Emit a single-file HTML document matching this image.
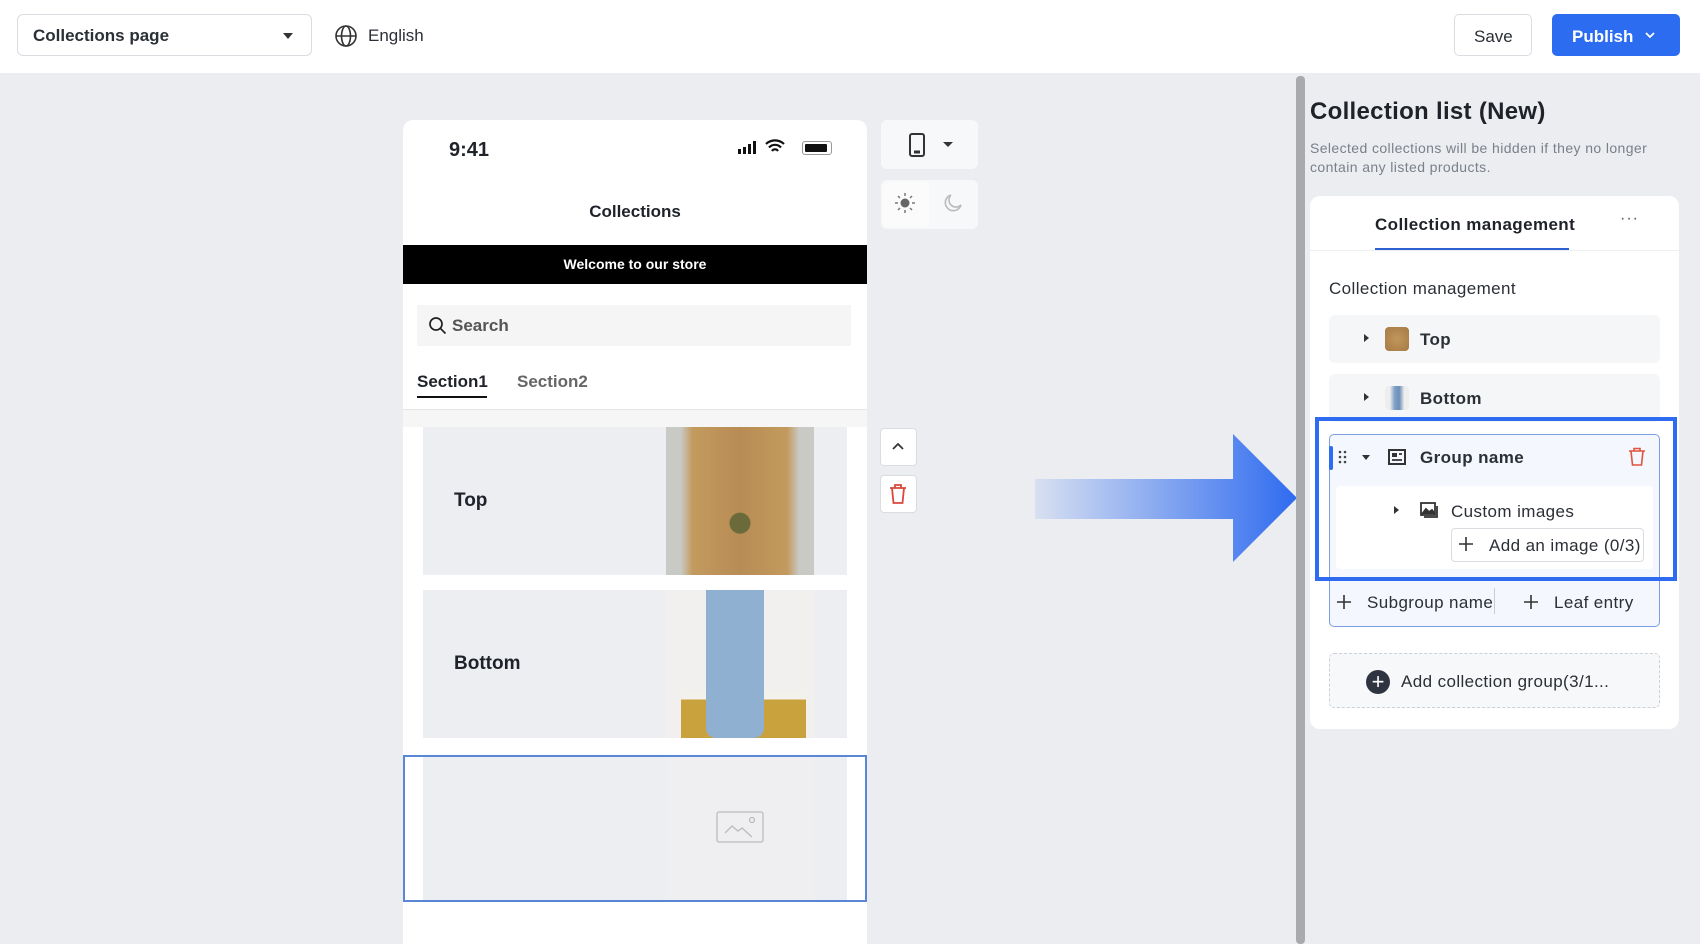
<!DOCTYPE html>
<html><head><meta charset="utf-8"><style>
*{box-sizing:border-box;margin:0;padding:0}
body{width:1700px;height:944px;overflow:hidden;background:#ebedf1;font-family:"Liberation Sans",sans-serif;color:#1f2329;position:relative}
.a{position:absolute}
.top{left:0;top:0;width:1700px;height:73px;background:#fff}
.btn{border:1px solid #d9dce1;border-radius:4px;background:#fff}
.phone{left:403px;top:120px;width:464px;height:824px;background:#fff;border-radius:10px 10px 0 0;overflow:hidden}
.card{background:#eceef2}
.tb{background:#f7f8fa;border-radius:6px}
.row{background:#f5f6f8;border-radius:6px}
.ls{letter-spacing:.4px}
</style></head><body>
<div class="a top"></div>
<div class="a btn" style="left:17px;top:14px;width:295px;height:42px;border-radius:6px"></div>
<div class="a" style="left:33px;top:26px;font-size:17px;font-weight:bold;color:#2b2f36">Collections page</div>
<div class="a" style="left:283px;top:33px;width:0;height:0;border-left:5px solid transparent;border-right:5px solid transparent;border-top:6px solid #333"></div>
<svg class="a" style="left:334px;top:24px" width="24" height="24" viewBox="0 0 24 24" fill="none" stroke="#333" stroke-width="1.6"><circle cx="12" cy="12" r="10"/><ellipse cx="12" cy="12" rx="4.5" ry="10"/><path d="M2 12h20"/></svg>
<div class="a" style="left:368px;top:26px;font-size:17px;color:#2b2f36">English</div>
<div class="a btn" style="left:1454px;top:14px;width:78px;height:42px;border-radius:5px"></div>
<div class="a" style="left:1474px;top:27px;font-size:17px;color:#2b2f36">Save</div>
<div class="a" style="left:1552px;top:14px;width:128px;height:42px;background:#2c6cf0;border-radius:5px"></div>
<div class="a" style="left:1572px;top:27px;font-size:17px;font-weight:bold;color:#fff">Publish</div>
<svg class="a" style="left:1644px;top:30px" width="12" height="10" viewBox="0 0 12 10" fill="none" stroke="#fff" stroke-width="1.8"><path d="M2 3l4 4 4-4"/></svg>

<div class="a phone">
 <div class="a" style="left:46px;top:19px;font-size:20px;font-weight:bold">9:41</div>
 <svg class="a" style="left:335px;top:21px" width="20" height="13"><rect x="0" y="8" width="3" height="5" fill="#111"/><rect x="5" y="6" width="3" height="7" fill="#111"/><rect x="10" y="3" width="3" height="10" fill="#111"/><rect x="15" y="0" width="3" height="13" fill="#111"/></svg>
 <svg class="a" style="left:361px;top:19px" width="22" height="16" viewBox="0 0 22 16" fill="none" stroke="#111" stroke-width="2.2"><path d="M2 5a13 13 0 0118 0M5 8.5a8 8 0 0112 0M8 12a3.5 3.5 0 016 0"/></svg>
 <div class="a" style="left:399px;top:21px;width:30px;height:14px;border:1.5px solid #999;border-radius:3px"><div style="margin:1.5px;width:22px;height:8px;background:#111;border-radius:1px"></div></div>
 <div class="a" style="left:0;top:82px;width:464px;text-align:center;font-size:17px;font-weight:bold">Collections</div>
 <div class="a" style="left:0;top:125px;width:464px;height:39px;background:#000;color:#fff;text-align:center;font-size:14px;font-weight:bold;line-height:39px">Welcome to our store</div>
 <div class="a" style="left:14px;top:185px;width:434px;height:41px;background:#f5f5f5"></div>
 <svg class="a" style="left:25px;top:196px" width="20" height="20" viewBox="0 0 20 20" fill="none" stroke="#222" stroke-width="1.7"><circle cx="8" cy="8" r="6"/><path d="M12.5 12.5l5 5"/></svg>
 <div class="a" style="left:49px;top:196px;font-size:17px;font-weight:bold;color:#555">Search</div>
 <div class="a" style="left:14px;top:252px;font-size:17px;font-weight:bold">Section1</div>
 <div class="a" style="left:14px;top:276px;width:70px;height:2px;background:#111"></div>
 <div class="a" style="left:114px;top:252px;font-size:17px;font-weight:bold;color:#666">Section2</div>
 <div class="a" style="left:0;top:289px;width:464px;height:18px;background:#f6f6f6;border-top:1px solid #e6e6e6"></div>
 <div class="a card" style="left:20px;top:307px;width:424px;height:148px"></div>
 <div class="a" style="left:51px;top:370px;font-size:19px;font-weight:bold">Top</div>
 <div class="a" style="left:263px;top:307px;width:148px;height:148px;background:radial-gradient(circle at 50% 65%,#6b6a3a 0 10px,transparent 11px),linear-gradient(90deg,#c9cac5 0 10%,#c39a5e 18%,#b88c55 50%,#c39a5e 82%,#c9cac5 90%)"></div>
 <div class="a card" style="left:20px;top:470px;width:424px;height:148px"></div>
 <div class="a" style="left:51px;top:533px;font-size:19px;font-weight:bold">Bottom</div>
 <div class="a" style="left:263px;top:470px;width:148px;height:148px;background:#f1f0ee"><div class="a" style="left:15px;top:100px;width:125px;height:48px;background:linear-gradient(#f3f1ec 0 20%,#c9a23d 20%)"></div><div class="a" style="left:40px;top:0;width:58px;height:148px;background:#8fb0d0;border-radius:0 0 10px 10px"></div></div>
 <div class="a" style="left:0;top:635px;width:464px;height:147px;border:2px solid #5a86d6"></div>
 <div class="a card" style="left:20px;top:637px;width:424px;height:143px"></div>
 <div class="a" style="left:263px;top:637px;width:148px;height:143px;background:#efeff1"></div>
 <svg class="a" style="left:313px;top:691px" width="48" height="32" viewBox="0 0 48 32" fill="none" stroke="#bbb" stroke-width="1.3"><rect x="1" y="1" width="46" height="30" rx="2"/><path d="M9 22l7-7 6 5 4-3 10 9"/><circle cx="36" cy="9" r="2.5"/></svg>
</div>

<div class="a tb" style="left:881px;top:120px;width:97px;height:49px"></div>
<svg class="a" style="left:908px;top:132px" width="18" height="26" viewBox="0 0 18 26" fill="none" stroke="#333" stroke-width="2"><rect x="2" y="2" width="14" height="22" rx="2"/><path d="M6 20h6" stroke-width="3"/></svg>
<div class="a" style="left:943px;top:142px;border-left:5px solid transparent;border-right:5px solid transparent;border-top:5px solid #333"></div>
<div class="a tb" style="left:881px;top:180px;width:97px;height:49px"></div>
<div class="a" style="left:883px;top:182px;width:46px;height:45px;background:#fbfbfc;border-radius:5px"></div>
<svg class="a" style="left:894px;top:192px" width="22" height="22" viewBox="0 0 22 22" fill="#666" stroke="#777" stroke-width="1.5"><circle cx="11" cy="11" r="4.5" stroke="none"/><path d="M11 1v3M11 18v3M1 11h3M18 11h3M4 4l2 2M16 16l2 2M4 18l2-2M16 6l2-2"/></svg>
<svg class="a" style="left:943px;top:193px" width="20" height="20" viewBox="0 0 20 20" fill="none" stroke="#bbb" stroke-width="1.6"><path d="M8 2a8 8 0 1010 10A7 7 0 018 2z"/></svg>
<div class="a btn" style="left:880px;top:428px;width:37px;height:38px"></div>
<svg class="a" style="left:890px;top:440px" width="16" height="12" viewBox="0 0 16 12" fill="none" stroke="#333" stroke-width="1.7"><path d="M3 9l5-5 5 5"/></svg>
<div class="a btn" style="left:880px;top:475px;width:37px;height:38px"></div>
<svg class="a" style="left:888px;top:483px" width="20" height="22" viewBox="0 0 20 22" fill="none" stroke="#d9473d" stroke-width="1.8"><path d="M2 5h16M7 5V2h6v3M4 5l1.5 15h9L16 5"/></svg>

<svg class="a" style="left:1035px;top:434px" width="262" height="128" viewBox="0 0 262 128"><defs><linearGradient id="g" x1="0" x2="1"><stop offset="0" stop-color="#2f6bf0" stop-opacity=".1"/><stop offset="1" stop-color="#2f6bf0"/></linearGradient></defs><path d="M0 45h198V0l64 64-64 64V85H0z" fill="url(#g)"/></svg>

<div class="a" style="left:1296px;top:76px;width:9px;height:868px;background:#a9aaad;border-radius:4px"></div>

<div class="a" style="left:1310px;top:98px;font-size:24px;font-weight:bold;color:#1f2329;letter-spacing:.3px">Collection list (New)</div>
<div class="a ls" style="left:1310px;top:139px;font-size:14px;line-height:19px;color:#7a8089;width:380px;white-space:nowrap">Selected collections will be hidden if they no longer<br>contain any listed products.</div>
<div class="a" style="left:1310px;top:196px;width:369px;height:533px;background:#fff;border-radius:10px"></div>
<div class="a ls" style="left:1375px;top:215px;font-size:17px;font-weight:bold">Collection management</div>
<div class="a" style="left:1375px;top:248px;width:194px;height:2px;background:#2c5fcf"></div>
<div class="a" style="left:1310px;top:250px;width:369px;height:1px;background:#eceef1"></div>
<div class="a" style="left:1620px;top:210px;font-size:16px;color:#555;letter-spacing:1px">···</div>
<div class="a ls" style="left:1329px;top:279px;font-size:17px;color:#2b2f36">Collection management</div>

<div class="a row" style="left:1329px;top:315px;width:331px;height:48px"></div>
<div class="a" style="left:1364px;top:334px;border-top:4px solid transparent;border-bottom:4px solid transparent;border-left:5px solid #333"></div>
<div class="a" style="left:1385px;top:327px;width:24px;height:24px;border-radius:4px;background:radial-gradient(circle,#c2965a,#a57a45)"></div>
<div class="a ls" style="left:1420px;top:330px;font-size:17px;font-weight:bold;color:#2b2f36">Top</div>
<div class="a row" style="left:1329px;top:374px;width:331px;height:48px"></div>
<div class="a" style="left:1364px;top:393px;border-top:4px solid transparent;border-bottom:4px solid transparent;border-left:5px solid #333"></div>
<div class="a" style="left:1385px;top:386px;width:24px;height:24px;border-radius:4px;background:linear-gradient(90deg,#eee 20%,#7fa1c6 40%,#6d8fb8 60%,#eee 80%)"></div>
<div class="a ls" style="left:1420px;top:389px;font-size:17px;font-weight:bold;color:#2b2f36">Bottom</div>

<div class="a" style="left:1329px;top:434px;width:331px;height:193px;border:1.5px solid #7d9ee0;border-radius:5px;background:#f4f7fd"></div>
<div class="a" style="left:1329px;top:446px;width:4px;height:24px;background:#2c6cf0;border-radius:2px"></div>
<svg class="a" style="left:1338px;top:450px" width="10" height="14"><g fill="#444"><circle cx="2" cy="2" r="1.3"/><circle cx="7" cy="2" r="1.3"/><circle cx="2" cy="7" r="1.3"/><circle cx="7" cy="7" r="1.3"/><circle cx="2" cy="12" r="1.3"/><circle cx="7" cy="12" r="1.3"/></g></svg>
<div class="a" style="left:1362px;top:455px;border-left:4.5px solid transparent;border-right:4.5px solid transparent;border-top:5px solid #333"></div>
<svg class="a" style="left:1388px;top:449px" width="18" height="16" viewBox="0 0 18 16"><rect x="1" y="1" width="16" height="14" fill="none" stroke="#333" stroke-width="2"/><rect x="4" y="4" width="5" height="4" fill="#333"/><path d="M11 5h3M4 11h10" stroke="#333" stroke-width="1.8"/></svg>
<div class="a ls" style="left:1420px;top:448px;font-size:17px;font-weight:bold;color:#2b2f36">Group name</div>
<svg class="a" style="left:1628px;top:447px" width="18" height="20" viewBox="0 0 18 20" fill="none" stroke="#e0533f" stroke-width="1.6"><path d="M1 4h16M6 4V1.5h6V4M3 4l1.5 14h9L15 4"/></svg>
<div class="a" style="left:1336px;top:486px;width:317px;height:83px;background:#fff;border-radius:4px"></div>
<div class="a" style="left:1394px;top:506px;border-top:4px solid transparent;border-bottom:4px solid transparent;border-left:5px solid #333"></div>
<svg class="a" style="left:1420px;top:502px" width="18" height="16" viewBox="0 0 18 16" fill="none" stroke="#333" stroke-width="1.8"><rect x="1" y="1" width="14" height="12"/><path d="M2 12l4-5 3 3 3-2 3 4" fill="#333"/><path d="M17 4v11H4"/></svg>
<div class="a ls" style="left:1451px;top:502px;font-size:17px;color:#2b2f36">Custom images</div>
<div class="a" style="left:1451px;top:528px;width:193px;height:34px;border:1px solid #d9dce1;border-radius:4px;background:#fff"></div>
<svg class="a" style="left:1458px;top:536px" width="16" height="16" stroke="#333" stroke-width="1.6"><path d="M8 1v14M1 8h14"/></svg>
<div class="a ls" style="left:1489px;top:536px;font-size:17px;color:#2b2f36">Add an image (0/3)</div>
<div class="a" style="left:1315px;top:417px;width:362px;height:164px;border:4px solid #2f6bf0"></div>
<svg class="a" style="left:1336px;top:594px" width="16" height="16" stroke="#333" stroke-width="1.6"><path d="M8 1v14M1 8h14"/></svg>
<div class="a ls" style="left:1367px;top:593px;font-size:17px;color:#2b2f36">Subgroup name</div>
<div class="a" style="left:1494px;top:588px;width:1px;height:26px;background:#ccc"></div>
<svg class="a" style="left:1523px;top:594px" width="16" height="16" stroke="#333" stroke-width="1.6"><path d="M8 1v14M1 8h14"/></svg>
<div class="a ls" style="left:1554px;top:593px;font-size:17px;color:#2b2f36">Leaf entry</div>

<div class="a" style="left:1329px;top:653px;width:331px;height:55px;border:1.5px dashed #ccd0d6;border-radius:5px;background:#f7f8fa"></div>
<div class="a" style="left:1366px;top:670px;width:24px;height:24px;border-radius:50%;background:#2f3540;color:#fff;text-align:center;font-size:22px;line-height:23px">+</div>
<div class="a ls" style="left:1401px;top:672px;font-size:17px;color:#2b2f36">Add collection group(3/1...</div>
</body></html>
